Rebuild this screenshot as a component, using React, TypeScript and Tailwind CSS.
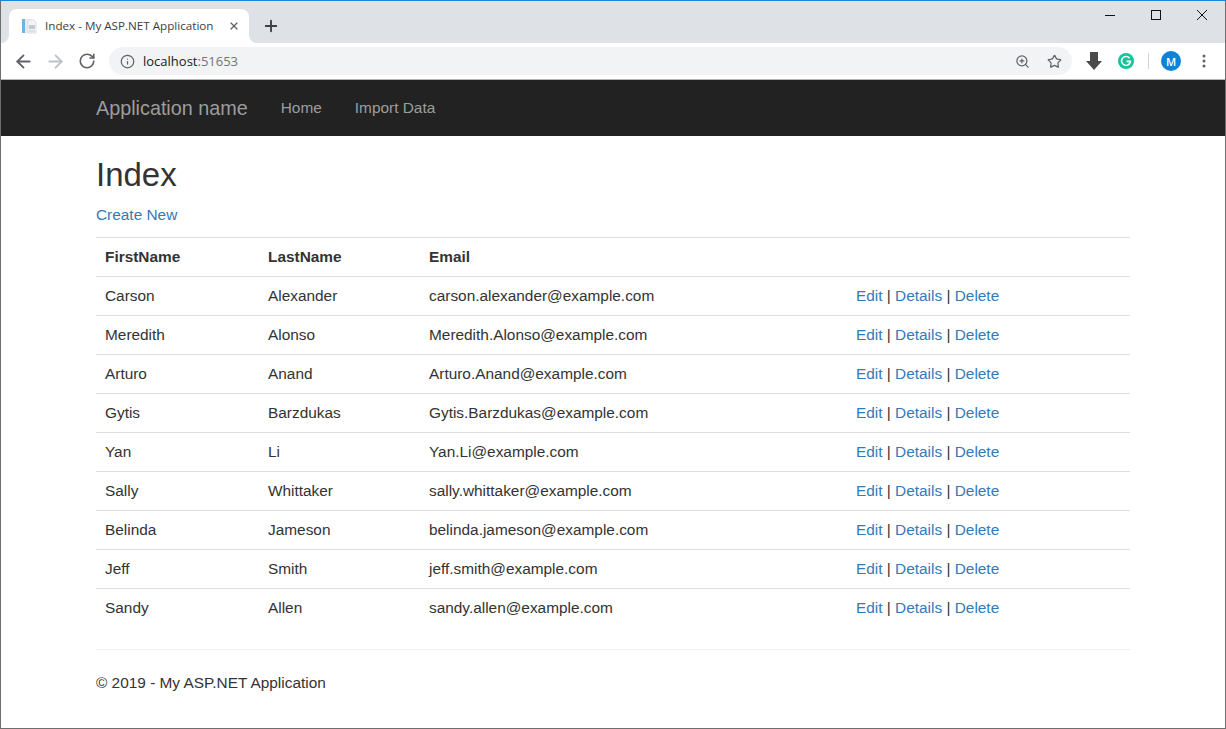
import { ArrowLeft, ArrowRight, RotateCw, Info, ZoomIn, Star, Plus, X } from 'lucide-react';

const students = [
  { first: 'Carson', last: 'Alexander', email: 'carson.alexander@example.com' },
  { first: 'Meredith', last: 'Alonso', email: 'Meredith.Alonso@example.com' },
  { first: 'Arturo', last: 'Anand', email: 'Arturo.Anand@example.com' },
  { first: 'Gytis', last: 'Barzdukas', email: 'Gytis.Barzdukas@example.com' },
  { first: 'Yan', last: 'Li', email: 'Yan.Li@example.com' },
  { first: 'Sally', last: 'Whittaker', email: 'sally.whittaker@example.com' },
  { first: 'Belinda', last: 'Jameson', email: 'belinda.jameson@example.com' },
  { first: 'Jeff', last: 'Smith', email: 'jeff.smith@example.com' },
  { first: 'Sandy', last: 'Allen', email: 'sandy.allen@example.com' },
];

function Favicon() {
  return (
    <svg width="16" height="16" viewBox="0 0 16 16" className="shrink-0">
      <rect x="1" y="1" width="9" height="14" fill="#e6eaee" />
      <rect x="1" y="1" width="3" height="14" fill="#6db3e3" />
      <path d="M7 2h6l2 2v11H7z" fill="#f3f4f6" stroke="#d5d9de" strokeWidth="0.8" />
      <rect x="8" y="7" width="6" height="4" fill="#c5cad1" />
      <path d="M8 13h6" stroke="#c5cad1" strokeWidth="1" />
    </svg>
  );
}

function ChromeBar() {
  return (
    <div className="shrink-0 font-['Open_Sans','Noto_Sans',sans-serif]">
      {/* tab strip */}
      <div className="h-[42px] bg-[#dee1e6] flex items-end pl-[8px]">
        <div className="relative h-[34px] w-[240px] bg-white rounded-t-[8px] flex items-center pl-[12px] pr-[9px]">
          <div className="absolute -left-[8px] bottom-0 w-[8px] h-[8px] bg-white">
            <div className="w-full h-full bg-[#dee1e6] rounded-br-[8px]" />
          </div>
          <div className="absolute -right-[8px] bottom-0 w-[8px] h-[8px] bg-white">
            <div className="w-full h-full bg-[#dee1e6] rounded-bl-[8px]" />
          </div>
          <Favicon />
          <span className="ml-[8px] flex-1 text-[11.65px] text-[#3c4043] whitespace-nowrap">Index - My ASP.NET Application</span>
          <X size={12} strokeWidth={2.5} className="text-[#5f6368]" />
        </div>
        <div className="h-[34px] ml-[13px] flex items-center">
          <Plus size={18} strokeWidth={2.5} className="text-[#3c4043]" />
        </div>
        <div className="flex-1 self-start flex justify-end">
          <div className="w-[46px] h-[28px] flex items-center justify-center">
            <svg width="10" height="10" viewBox="0 0 10 10">
              <path d="M0 5.5h10" stroke="#111" strokeWidth="1" />
            </svg>
          </div>
          <div className="w-[46px] h-[28px] flex items-center justify-center">
            <svg width="10" height="10" viewBox="0 0 10 10">
              <rect x="0.5" y="0.5" width="9" height="9" fill="none" stroke="#111" strokeWidth="1" />
            </svg>
          </div>
          <div className="w-[46px] h-[28px] flex items-center justify-center">
            <svg width="10" height="10" viewBox="0 0 10 10">
              <path d="M0 0l10 10M10 0L0 10" stroke="#111" strokeWidth="1" />
            </svg>
          </div>
        </div>
      </div>
      {/* toolbar */}
      <div className="h-[37px] bg-white border-b border-[#b4b4b4] flex items-center">
        <div className="w-[108px] flex items-center pl-[6px]">
          <div className="w-[32px] flex justify-center">
            <ArrowLeft size={21} strokeWidth={2.1} className="text-[#5f6368]" />
          </div>
          <div className="w-[32px] flex justify-center">
            <ArrowRight size={21} strokeWidth={2.1} className="text-[#bdc1c6]" />
          </div>
          <div className="w-[32px] flex justify-center">
            <RotateCw size={18} strokeWidth={2.2} className="text-[#5f6368]" />
          </div>
        </div>
        <div className="w-[963px] h-[28px] rounded-full bg-[#f1f3f4] flex items-center pl-[11px] pr-[10px]">
          <Info size={15} strokeWidth={2} className="text-[#5f6368]" />
          <span className="ml-[8px] flex-1 text-[13px] text-[#202124]">
            localhost<span className="text-[#70757a]">:51653</span>
          </span>
          <ZoomIn size={15} strokeWidth={2} className="text-[#5f6368]" />
          <Star size={15} strokeWidth={2} className="ml-[17px] text-[#5f6368]" />
        </div>
        <div className="flex-1 flex items-center pl-[14px]">
          <svg width="16" height="18" viewBox="0 0 16 18">
            <path d="M4 0h8v9h4l-8 9-8-9h4z" fill="#4a4a4a" />
          </svg>
          <svg width="16" height="16" viewBox="0 0 16 16" className="ml-[16px]">
            <circle cx="8" cy="8" r="8" fill="#15c39a" />
            <path d="M11.6 5.2A4.5 4.5 0 1 0 12.5 8.4H8.6" fill="none" stroke="#fff" strokeWidth="1.6" />
          </svg>
          <div className="ml-[14px] w-px h-[16px] bg-[#d0d3d6]" />
          <div className="ml-[12px] w-[20px] h-[20px] rounded-full bg-[#0b83d9] flex items-center justify-center text-white text-[11px] font-semibold leading-none">M</div>
          <svg width="4" height="14" viewBox="0 0 4 14" className="ml-[21px]">
            <circle cx="2" cy="2" r="1.5" fill="#5f6368" />
            <circle cx="2" cy="7" r="1.5" fill="#5f6368" />
            <circle cx="2" cy="12" r="1.5" fill="#5f6368" />
          </svg>
        </div>
      </div>
    </div>
  );
}

export default function App() {
  return (
    <div className="w-[1226px] h-[729px] overflow-hidden flex flex-col bg-white border-x border-b border-x-[#6e6e6e] border-b-[#6e6e6e] border-t border-t-[#1a88d8] font-['Liberation_Sans',Arial,sans-serif] text-[15.4px] leading-[22px] text-[#333]">
      <ChromeBar />

      {/* Navbar */}
      <div className="h-[56px] shrink-0 bg-[#222] px-[95px] flex items-center gap-[33px] text-[#9d9d9d]">
        <span className="text-[19.8px]">Application name</span>
        <span>Home</span>
        <span>Import Data</span>
      </div>

      <div className="px-[95px]">
        <h2 className="mt-[21px] text-[33px] leading-[36px]">Index</h2>
        <p className="mt-[11px]">
          <a className="text-[#337ab7]">Create New</a>
        </p>

        <table className="mt-[11px] w-full table-fixed border-collapse">
          <colgroup>
            <col className="w-[163px]" />
            <col className="w-[161px]" />
            <col className="w-[427px]" />
            <col />
          </colgroup>
          <thead>
            <tr className="h-[39px] border-t border-[#ddd] text-left">
              <th className="px-[9px] font-bold">FirstName</th>
              <th className="px-[9px] font-bold">LastName</th>
              <th className="px-[9px] font-bold">Email</th>
              <th />
            </tr>
          </thead>
          <tbody>
            {students.map((student) => (
              <tr key={student.email} className="h-[39px] border-t border-[#ddd]">
                <td className="px-[9px]">{student.first}</td>
                <td className="px-[9px]">{student.last}</td>
                <td className="px-[9px]">{student.email}</td>
                <td className="px-[9px]">
                  <a className="text-[#337ab7]">Edit</a> | <a className="text-[#337ab7]">Details</a> | <a className="text-[#337ab7]">Delete</a>
                </td>
              </tr>
            ))}
          </tbody>
        </table>

        <hr className="mt-[21px] border-t border-[#eee]" />
        <footer className="mt-[22px]">
          <p>© 2019 - My ASP.NET Application</p>
        </footer>
      </div>
    </div>
  );
}
